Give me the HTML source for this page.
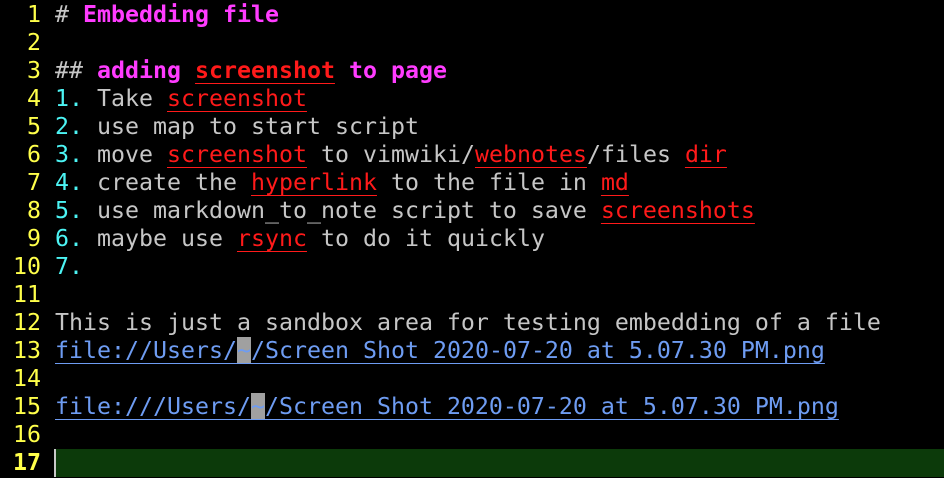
<!DOCTYPE html>
<html><head><meta charset="utf-8"><style>
body{margin:0;background:#000;width:944px;height:478px;overflow:hidden;font-family:"DejaVu Sans Mono","Liberation Mono",monospace;font-size:23.25px;}
.r{position:absolute;left:0;height:28px;line-height:28px;width:944px;white-space:pre;}
.n{position:absolute;left:0;width:41px;text-align:right;color:#ffff4a;}
.t{position:absolute;left:55px;color:#c6c6c6;}
.h{color:#ff3cff;font-weight:bold}
.g{color:#c6c6c6}
.e{color:#ff1a1a;text-decoration:underline;text-decoration-color:#ff1a1a;text-underline-offset:5px;text-decoration-thickness:1px}
.eb{color:#ff1a1a;font-weight:bold;text-decoration:underline;text-underline-offset:5px;text-decoration-thickness:1px}
.c{color:#4cf4f4}
.l{color:#6e9cf2;text-decoration:underline;text-underline-offset:5px;text-decoration-thickness:1px}
.til{background:#a0a0a0;color:#6e9cf2}
</style></head><body>
<div class="r" style="top:1px"><span class="n">1</span><span class="t"><span class="g">#</span> <span class="h">Embedding file</span></span></div>
<div class="r" style="top:29px"><span class="n">2</span></div>
<div class="r" style="top:57px"><span class="n">3</span><span class="t"><span class="g">##</span> <span class="h">adding </span><span class="eb">screenshot</span><span class="h"> to page</span></span></div>
<div class="r" style="top:85px"><span class="n">4</span><span class="t"><span class="c">1.</span> Take <span class="e">screenshot</span></span></div>
<div class="r" style="top:113px"><span class="n">5</span><span class="t"><span class="c">2.</span> use map to start script</span></div>
<div class="r" style="top:141px"><span class="n">6</span><span class="t"><span class="c">3.</span> move <span class="e">screenshot</span> to vimwiki/<span class="e">webnotes</span>/files <span class="e">dir</span></span></div>
<div class="r" style="top:169px"><span class="n">7</span><span class="t"><span class="c">4.</span> create the <span class="e">hyperlink</span> to the file in <span class="e">md</span></span></div>
<div class="r" style="top:197px"><span class="n">8</span><span class="t"><span class="c">5.</span> use markdown_to_note script to save <span class="e">screenshots</span></span></div>
<div class="r" style="top:225px"><span class="n">9</span><span class="t"><span class="c">6.</span> maybe use <span class="e">rsync</span> to do it quickly</span></div>
<div class="r" style="top:253px"><span class="n">10</span><span class="t"><span class="c">7.</span></span></div>
<div class="r" style="top:281px"><span class="n">11</span></div>
<div class="r" style="top:309px"><span class="n">12</span><span class="t">This is just a sandbox area for testing embedding of a file</span></div>
<div class="r" style="top:337px"><span class="n">13</span><span class="t"><span class="l">file://Users/<span class="til">~</span>/Screen Shot 2020-07-20 at 5.07.30 PM.png</span></span></div>
<div class="r" style="top:365px"><span class="n">14</span></div>
<div class="r" style="top:393px"><span class="n">15</span><span class="t"><span class="l">file:///Users/<span class="til">~</span>/Screen Shot 2020-07-20 at 5.07.30 PM.png</span></span></div>
<div class="r" style="top:421px"><span class="n">16</span></div>
<div class="r" style="top:449px"><div style="position:absolute;left:55px;top:0;right:0;height:28px;background:#0c3a0a"></div><div style="position:absolute;left:54px;top:0;width:2px;height:28px;background:#c8c8c8"></div><span class="n" style="font-weight:bold">17</span></div>
</body></html>
